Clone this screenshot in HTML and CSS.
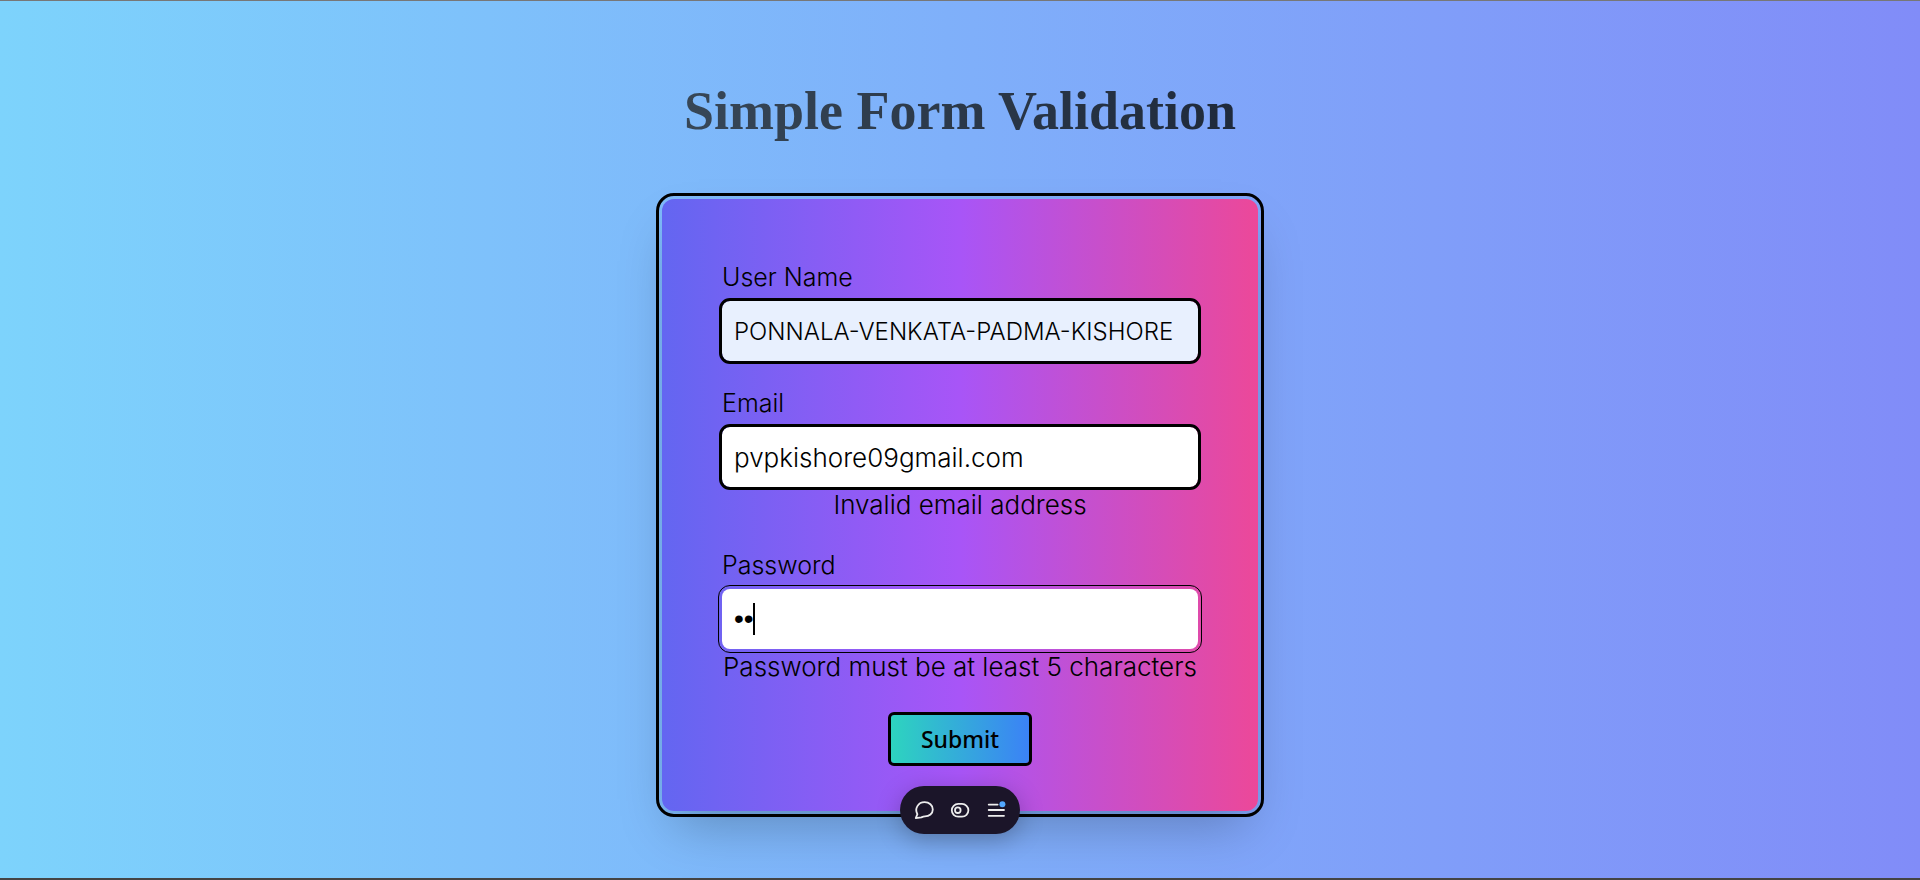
FILE: index.html
```html
<!DOCTYPE html>
<html lang="en">
<head>
<meta charset="utf-8">
<meta name="viewport" content="width=device-width, initial-scale=1">
<title>Simple Form Validation</title>
<link rel="stylesheet" href="styles.css">
</head>
<body>
<main class="page">
  <h1 class="title">Simple Form Validation</h1>
  <form class="card" novalidate>
    <div class="field">
      <label class="label" for="username">User Name</label>
      <input class="input input-filled" id="username" type="text" value="PONNALA-VENKATA-PADMA-KISHORE">
    </div>
    <div class="field">
      <label class="label" for="email">Email</label>
      <input class="input input-email" id="email" type="email" value="pvpkishore09gmail.com" aria-describedby="email-error">
      <p class="error" id="email-error">Invalid email address</p>
    </div>
    <div class="field">
      <label class="label" for="password">Password</label>
      <div class="control">
        <input class="input input-active" id="password" type="password" value="ab" aria-describedby="password-error">
        <span class="caret"></span>
      </div>
      <p class="error" id="password-error">Password must be at least 5 characters</p>
    </div>
    <button class="submit" type="button">Submit</button>
  </form>
</main>
<div class="toolbar">
  <button class="tool" type="button" aria-label="Comments">
    <svg width="20" height="20" viewBox="0 0 20 20"><path d="M1.8 18.2 3.4 14.2C.2 8.6 4.2 2.2 10.6 2.2C15.2 2.2 18.8 5.2 18.8 9.4C18.8 13.6 15.2 16.4 11 16.4C9.8 16.4 8.6 16.8 7.4 17.4Z"/></svg>
  </button>
  <button class="tool" type="button" aria-label="Flags">
    <svg width="20" height="20" viewBox="0 0 20 20"><rect x="1.8" y="3.9" width="16.6" height="12.8" rx="6.4"/><circle cx="7.8" cy="10.2" r="2.8"/></svg>
  </button>
  <button class="tool" type="button" aria-label="Menu">
    <svg width="20" height="20" viewBox="0 0 20 20"><path d="M2.7 4.6H11.6M2.7 10H18M2.7 15.8H18"/><circle class="dot" cx="16.4" cy="4.2" r="3"/></svg>
  </button>
</div>
</body>
</html>
```
FILE: styles.css
```css
* {
  box-sizing: border-box;
  margin: 0;
}

body {
  font-family: Inter, "Open Sans", sans-serif;
  font-size: 24px;
  font-weight: 300;
  line-height: 36px;
  color: #000;
}

.page {
  min-height: 100vh;
  display: flex;
  flex-direction: column;
  align-items: center;
  gap: 54px;
  padding: 76px 16px 64px;
  border-top: 1px solid #777;
  border-bottom: 2px solid #444;
  background: linear-gradient(to right, #7dd3fc, #818cf8);
}

.title {
  font-family: "Liberation Serif", serif;
  font-size: 54px;
  font-weight: 700;
  line-height: 68px;
  color: transparent;
  background: linear-gradient(to right, #374757, #1f2a3b);
  background-clip: text;
}

.card {
  width: 596px;
  max-width: 100%;
  display: flex;
  flex-direction: column;
  align-items: center;
  gap: 24px;
  padding: 60px 60px 48px;
  border-radius: 12px;
  outline: 3px solid #000;
  outline-offset: 3px;
  background: linear-gradient(to right, #6366f1, #a855f7, #ec4899);
  box-shadow: 0 25px 50px -12px rgba(0, 0, 0, 0.25);
}

.field {
  width: 100%;
}

.label {
  display: block;
  margin-bottom: 6px;
  font-size: 25px;
}

.control {
  position: relative;
}

.input {
  display: block;
  width: 100%;
  height: 60px;
  padding: 0 12px;
  border: 0;
  border-radius: 8px;
  outline: 3px solid #000;
  background: #fff;
  font: inherit;
  color: #000;
}

.input-filled {
  background: #e8f0fe;
}

.input-email {
  font-size: 26px;
}

.input-active {
  outline-width: 1px;
  outline-offset: 3px;
  font-family: "Liberation Sans", sans-serif;
  font-size: 28px;
}

.caret {
  position: absolute;
  left: 31px;
  top: 14px;
  width: 2px;
  height: 32px;
  background: #000;
}

.error {
  font-size: 26px;
  text-align: center;
  white-space: nowrap;
}

.submit {
  height: 48px;
  margin-top: 6px;
  padding: 0 30px;
  border: 0;
  border-radius: 3px;
  outline: 3px solid #000;
  background: linear-gradient(to right, #2dd4bf, #3b82f6);
  font-family: "Noto Sans", sans-serif;
  font-size: 23px;
  font-weight: 500;
  color: #000;
}

.toolbar {
  position: fixed;
  bottom: 46px;
  left: 50%;
  transform: translateX(-50%);
  display: flex;
  gap: 4px;
  padding: 8px;
  border-radius: 24px;
  background: #1b1529;
  box-shadow: 0 6px 24px rgba(0, 0, 0, 0.25);
}

.tool {
  width: 32px;
  height: 32px;
  display: grid;
  place-items: center;
  padding: 0;
  border: 0;
  background: none;
}

.tool svg {
  fill: none;
  stroke: #ededed;
  stroke-width: 1.8;
  stroke-linecap: round;
  stroke-linejoin: round;
}

.tool .dot {
  fill: #52a8ff;
  stroke: none;
}
```
